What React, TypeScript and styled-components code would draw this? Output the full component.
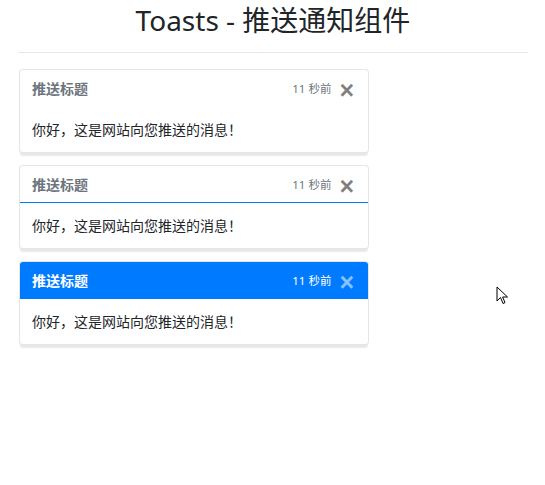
import React from "react";
import styled, { createGlobalStyle, css } from "styled-components";

const Global = createGlobalStyle`
  html, body { margin: 0; padding: 0; background: #fff; }
  body {
    font-family: "Noto Sans", "Noto Sans CJK SC", sans-serif;
    color: #212529;
    font-size: 14px;
    line-height: 1.5;
  }
`;

const Page = styled.div`
  position: relative;
  width: 545px;
  height: 485px;
  box-sizing: border-box;
  padding: 3px 17px 0 18px;
`;

const Heading = styled.h3`
  margin: 0;
  text-align: center;
  font-size: 28px;
  font-weight: 400;
  line-height: 34px;
  color: #212529;
  font-family: "Noto Sans", "Noto Sans CJK SC", sans-serif;
`;

const Rule = styled.hr`
  margin: 15px 0 16px;
  border: 0;
  border-top: 1px solid #e6e6e6;
`;

const Stack = styled.div`
  display: flex;
  flex-direction: column;
  gap: 12px;
  padding-left: 1px;
`;

type Variant = "plain" | "line" | "primary";

const ToastBox = styled.div`
  width: 350px;
  box-sizing: border-box;
  background: #fff;
  border: 1px solid rgba(0, 0, 0, 0.1);
  border-radius: 4px;
  box-shadow: 0 4px 1px -1px rgba(0, 0, 0, 0.09);
  overflow: hidden;
`;

const Header = styled.div<{ $variant: Variant }>`
  display: flex;
  align-items: center;
  height: 37px;
  box-sizing: border-box;
  padding: 0 12px;
  border-bottom: 1px solid transparent;
  color: #6c757d;
  ${(p) =>
    p.$variant === "line" &&
    css`
      border-bottom-color: #007bff;
    `}
  ${(p) =>
    p.$variant === "primary" &&
    css`
      background: #007bff;
      color: #fff;
      border-bottom-color: #007bff;
    `}
`;

const Title = styled.strong`
  margin-right: auto;
  font-size: 14px;
  font-weight: 700;
`;

const Time = styled.small`
  font-size: 11.5px;
  margin-top: 1px;
`;

const Close = styled.span<{ $light: boolean }>`
  margin-left: 8px;
  margin-right: 2px;
  margin-top: 5px;
  font-family: "Liberation Sans", Arial, sans-serif;
  font-size: 25px;
  font-weight: 700;
  line-height: 1;
  color: ${(p) => (p.$light ? "rgba(255,255,255,0.55)" : "rgba(0,0,0,0.5)")};
  text-shadow: ${(p) => (p.$light ? "none" : "0 1px 0 #fff")};
  cursor: pointer;
`;

const Body = styled.div`
  padding: 12px;
  font-size: 14px;
  line-height: 21px;
  color: #212529;
`;

const Cursor = styled.svg`
  position: absolute;
  left: 496px;
  top: 286px;
`;

function Toast({ variant }: { variant: Variant }) {
  return (
    <ToastBox>
      <Header $variant={variant}>
        <Title>推送标题</Title>
        <Time>11 秒前</Time>
        <Close $light={variant === "primary"}>×</Close>
      </Header>
      <Body>你好，这是网站向您推送的消息！</Body>
    </ToastBox>
  );
}

export default function App() {
  return (
    <>
      <Global />
      <Page>
        <Heading>Toasts - 推送通知组件</Heading>
        <Rule />
        <Stack>
          <Toast variant="plain" />
          <Toast variant="line" />
          <Toast variant="primary" />
        </Stack>
        <Cursor width="13" height="20" viewBox="0 0 13 20">
          <path
            d="M1 1 L1 15 L4.5 11.5 L7 17.5 L9 16.6 L6.6 11 L11.5 11 Z"
            fill="#fff"
            stroke="#000"
            strokeWidth="1"
            strokeLinejoin="miter"
          />
        </Cursor>
      </Page>
    </>
  );
}
